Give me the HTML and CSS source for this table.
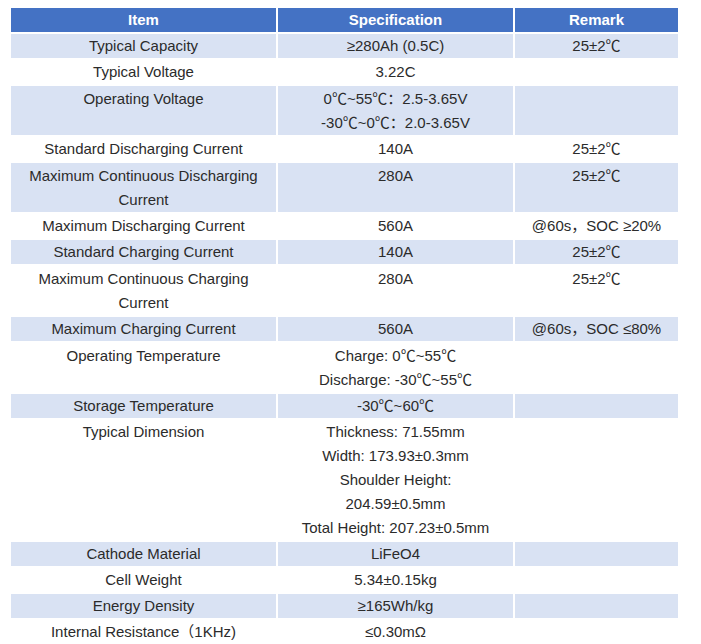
FILE: index.html
```html
<!DOCTYPE html>
<html>
<head>
<meta charset="utf-8">
<link rel="stylesheet" href="styles.css">
</head>
<body>
<table class="spec">
  <colgroup>
    <col class="c1"><col class="c2"><col class="c3">
  </colgroup>
  <thead>
    <tr><th>Item</th><th>Specification</th><th>Remark</th></tr>
  </thead>
  <tbody>
    <tr class="alt"><td>Typical Capacity</td><td>≥280Ah (0.5C)</td><td>25±2℃</td></tr>
    <tr><td>Typical Voltage</td><td>3.22C</td><td></td></tr>
    <tr class="alt two"><td>Operating Voltage</td><td>0℃~55℃：2.5-3.65V<br>-30℃~0℃：2.0-3.65V</td><td></td></tr>
    <tr><td>Standard Discharging Current</td><td>140A</td><td>25±2℃</td></tr>
    <tr class="alt two"><td>Maximum Continuous Discharging Current</td><td>280A</td><td>25±2℃</td></tr>
    <tr><td>Maximum Discharging Current</td><td>560A</td><td>@60s，SOC ≥20%</td></tr>
    <tr class="alt"><td>Standard Charging Current</td><td>140A</td><td>25±2℃</td></tr>
    <tr class="two"><td>Maximum Continuous Charging Current</td><td>280A</td><td>25±2℃</td></tr>
    <tr class="alt"><td>Maximum Charging Current</td><td>560A</td><td>@60s，SOC ≤80%</td></tr>
    <tr class="two"><td>Operating Temperature</td><td>Charge: 0℃~55℃<br>Discharge: -30℃~55℃</td><td></td></tr>
    <tr class="alt"><td>Storage Temperature</td><td>-30℃~60℃</td><td></td></tr>
    <tr><td>Typical Dimension</td><td>Thickness: 71.55mm<br>Width: 173.93±0.3mm<br>Shoulder Height:<br>204.59±0.5mm<br>Total Height: 207.23±0.5mm</td><td></td></tr>
    <tr class="alt"><td>Cathode Material</td><td>LiFeO4</td><td></td></tr>
    <tr><td>Cell Weight</td><td>5.34±0.15kg</td><td></td></tr>
    <tr class="alt"><td>Energy Density</td><td>≥165Wh/kg</td><td></td></tr>
    <tr><td>Internal Resistance（1KHz)</td><td>≤0.30mΩ</td><td></td></tr>
  </tbody>
</table>
</body>
</html>
```

FILE: styles.css
```css
html, body {
  margin: 0;
  padding: 0;
  background: #ffffff;
}

body {
  padding: 6px 0 0 9px;
  font-family: "Liberation Sans", "Noto Sans CJK SC", sans-serif;
  font-size: 15px;
  color: #2b2b2b;
}

.spec {
  border-collapse: separate;
  border-spacing: 2px;
  table-layout: fixed;
  width: 671px;
}

.c1 { width: 265px; }
.c2 { width: 235px; }
.c3 { width: 163px; }

.spec th {
  background: #4472c4;
  color: #ffffff;
  font-weight: bold;
  height: 24px;
  line-height: 24px;
  padding: 0;
  text-align: center;
}

.spec td {
  padding: 0 6px;
  line-height: 24px;
  text-align: center;
  vertical-align: top;
}

.spec tr.two td {
  padding-top: 1px;
  padding-bottom: 0;
  height: 48px;
}

.spec tr.alt td {
  background: #d9e2f3;
}
```
